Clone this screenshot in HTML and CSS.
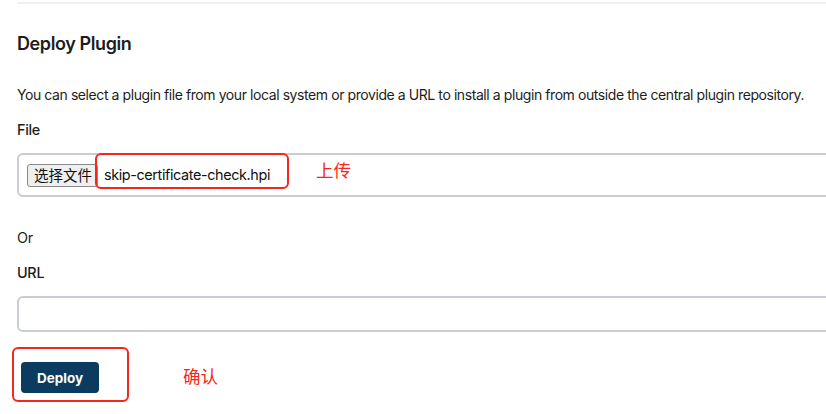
FILE: index.html
```html
<!DOCTYPE html>
<html lang="en">
<head>
<meta charset="utf-8">
<title>Deploy Plugin</title>
<link rel="stylesheet" href="styles.css">
</head>
<body>
<div class="page">
  <div class="rule"></div>
  <h2 class="title">Deploy Plugin</h2>
  <p class="desc">You can select a plugin file from your local system or provide a URL to install a plugin from outside the central plugin repository.</p>
  <div class="label label-file">File</div>
  <div class="field file-field">
    <span class="file-btn">选择文件</span>
    <span class="file-name">skip-certificate-check.hpi</span>
    <span class="mark mark-file"></span>
    <span class="note note-upload">上传</span>
  </div>
  <div class="label label-or">Or</div>
  <div class="label label-url">URL</div>
  <div class="field url-field"></div>
  <div class="actions">
    <button class="deploy" type="button">Deploy</button>
    <span class="mark mark-deploy"></span>
    <span class="note note-confirm">确认</span>
  </div>
</div>
</body>
</html>
```

FILE: styles.css
```css
html, body {
  margin: 0;
  padding: 0;
  background: #fff;
  overflow: hidden;
}
body {
  font-family: Inter, "Noto Sans", "Noto Sans CJK SC", sans-serif;
  color: #1d1d21;
  width: 826px;
  height: 414px;
}
.page {
  padding-left: 17px;
  position: relative;
}
.rule {
  height: 2px;
  margin-top: 2px;
  background: #eef0f3;
  margin-right: -20px;
}
.title {
  margin: 0;
  padding-top: 28px;
  font-size: 18px;
  line-height: 24px;
  font-weight: 600;
  letter-spacing: -0.4px;
}
.desc {
  margin: 0;
  padding-top: 29px;
  font-size: 14px;
  line-height: 20px;
  letter-spacing: -0.42px;
  white-space: nowrap;
}
.label {
  font-size: 14.4px;
  line-height: 20px;
  letter-spacing: -0.3px;
}
.label-file {
  padding-top: 15px;
  font-weight: 500;
}
.field {
  border: 2px solid #c7cdd2;
  border-radius: 6px;
  margin-right: -20px;
  box-sizing: border-box;
  position: relative;
}
.file-field {
  margin-top: 13px;
  height: 44px;
  display: flex;
  align-items: center;
  padding-left: 8px;
}
.file-btn {
  font-family: "Noto Sans CJK SC", sans-serif;
  font-size: 14.5px;
  line-height: 20px;
  height: 23px;
  box-sizing: border-box;
  padding: 0 5px 0 6px;
  background: #efefef;
  border: 1px solid #8a8a8a;
  border-radius: 3px;
  display: flex;
  align-items: center;
  color: #111;
}
.file-name {
  margin-left: 6px;
  font-size: 14.4px;
  line-height: 20px;
  letter-spacing: -0.38px;
  color: #111;
}
.mark {
  position: absolute;
  border: 2.5px solid #f5261b;
  border-radius: 6px;
  box-sizing: border-box;
}
.mark-file {
  left: 76px;
  top: -2px;
  width: 194px;
  height: 36px;
}
.note {
  position: absolute;
  font-family: "Noto Sans CJK SC", sans-serif;
  font-size: 17.5px;
  line-height: 24px;
  color: #f5261b;
}
.note-upload {
  left: 297px;
  top: 3px;
}
.label-or {
  padding-top: 31px;
}
.label-url {
  padding-top: 15px;
  font-weight: 500;
}
.url-field {
  margin-top: 13px;
  height: 36px;
}
.actions {
  position: relative;
  padding-top: 30px;
  padding-left: 4px;
}
.deploy {
  display: block;
  width: 78px;
  height: 31px;
  border: 0;
  border-radius: 4px;
  background: #0b3b5e;
  color: #fff;
  font-family: Inter, "Noto Sans", sans-serif;
  font-size: 13.5px;
  font-weight: 700;
  padding: 0;
}
.mark-deploy {
  left: -5px;
  top: 15px;
  width: 117px;
  height: 55px;
}
.note-confirm {
  left: 166px;
  top: 32px;
}
```
